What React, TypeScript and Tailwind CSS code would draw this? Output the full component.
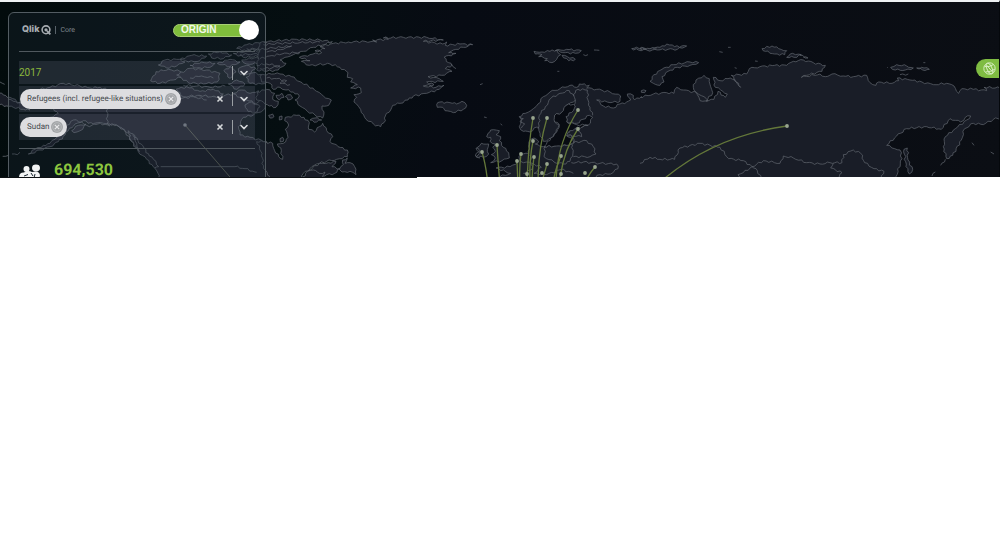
import { useState } from "react";

/* Coast lines are listed tile by tile, three drawing units to the pixel. */
type Shape = { d: string; open?: boolean; land?: boolean };
type Tile = { x: number; shapes: Shape[] };

function roughen(d: string, open?: boolean) {
  const pts = d.trim().split(/\s+/).map((p) => p.split(",").map(Number));
  if (!open) pts.push(pts[0]);
  const out: string[] = [];
  for (let i = 0; i < pts.length - 1; i++) {
    const [x1, y1] = pts[i];
    const [x2, y2] = pts[i + 1];
    const len = Math.hypot(x2 - x1, y2 - y1);
    const steps = len > 150 ? 1 : Math.max(1, Math.round(len / 8));
    for (let s = 0; s < steps; s++) {
      const t = s / steps;
      const n = s === 0 ? 0 : Math.sin((x1 + i * 7 + s * 31) * 12.9) * 3;
      const nx = -(y2 - y1) / (len || 1);
      const ny = (x2 - x1) / (len || 1);
      out.push(`${(x1 + (x2 - x1) * t + nx * n).toFixed(1)},${(y1 + (y2 - y1) * t + ny * n).toFixed(1)}`);
    }
  }
  out.push(pts[pts.length - 1].join(","));
  return "M" + out.join("L") + (open ? "" : "Z");
}

const tiles: Tile[] = [
  {
    x: 0,
    shapes: [
      { d: "-10,275 10,285 30,292 60,308 75,318 90,330 70,328 40,322 20,318 -10,312" },
      { d: "-10,246 0,246 14,253", open: true },
      { d: "8,469 26,466", open: true },
      { d: "36,462 52,464 60,457", open: true },
      { d: "85,462 105,448 130,436 150,430 165,418 178,408 160,402 150,390 158,376 140,368 150,352 175,340 160,326 130,322 138,308 166,304 150,290 108,278 120,268 150,262 190,250 240,258 270,264 300,262 322,270 370,280 420,288 480,270 560,282 640,290 700,282 760,292 800,310 790,330 760,345 730,352 715,380 720,405 750,412 800,425 800,560 480,560 474,520 460,500 440,478 415,455 395,425 385,400 350,375 310,370 280,372 250,362 225,372 205,392 195,405 175,425 150,440 120,450 95,460" },
      { d: "322,270 322,372 350,376 372,390 395,425", open: true },
      { d: "385,392 392,420 408,440 418,455 410,430 400,402" },
      { d: "200,376 220,360 245,366 268,380 292,368 330,378", open: true },
      { d: "215,392 235,376 258,372 248,388 222,398" },
      { d: "60,308 40,304 24,298", open: true },
    ],
  },
  {
    x: 130,
    shapes: [
      { d: "62,243 78,215 115,208 150,214 160,228 130,240 90,250" },
      { d: "85,195 105,180 140,178 165,186 140,198 110,204" },
      { d: "150,178 185,166 230,168 210,182 175,186" },
      { d: "140,225 180,205 230,210 270,220 262,246 220,252 175,248" },
      { d: "180,196 215,186 255,190 240,202 200,204" },
      { d: "235,162 270,155 305,165 280,176 245,174" },
      { d: "262,190 300,178 330,186 300,200" },
      { d: "282,212 300,200 318,216 300,235" },
      { d: "325,206 350,196 378,205 355,222 332,224" },
      { d: "295,252 320,240 345,252 320,268" },
      { d: "320,145 350,134 400,126 440,132 400,142 350,154" },
      { d: "310,160 360,152 420,158 400,168 340,172" },
      { d: "335,180 380,172 420,180 400,190 350,192" },
      { d: "348,232 370,218 400,226 425,240 395,252 360,250" },
      { d: "138,268 170,260 210,274 250,268 280,282 260,292 210,286 160,290" },
      { d: "310,280 335,270 360,280 385,272 400,296 380,310 350,300 330,292" },
      { d: "345,315 365,306 390,320 375,338 355,335" },
      { d: "160,256 200,258 240,262 286,258", open: true },
      { d: "180,234 215,228 250,234", open: true },
      { d: "110,288 150,296 190,290 230,300", open: true },
      { d: "350,146 400,148 430,144", open: true },
      { d: "330,164 370,162 410,164", open: true },
      { d: "8,404 24,422 42,444 58,468 78,484 86,500 74,504", open: true },
      { d: "92,500 315,500 345,506 375,516 400,530", open: true },
    ],
  },
  {
    x: 260,
    shapes: [
      { d: "0,128 50,122 110,118 180,120 217,125 190,134 160,142 130,154 100,164 75,172 60,180 78,190 55,210 20,214 -10,210" },
      { d: "-10,150 40,144 95,138 70,148 20,156", open: true },
      { d: "10,134 60,130 120,128 180,126", open: true },
      { d: "0,176 28,168 66,162 120,156", open: true },
      { d: "-10,196 20,192 60,198 36,204 0,206", open: true },
      { d: "0,228 26,220 60,222 95,230 120,245 145,258 170,274 190,288 214,300 206,316 186,318 192,336 188,354 165,345 142,334 120,318 105,300 118,288 100,276 78,270 60,262 40,268 30,250 5,246" },
      { d: "20,234 50,236 80,242 60,250 90,254", open: true },
      { d: "20,268 44,280 38,298 55,304 48,322 28,318 10,306 -10,300 -8,276" },
      { d: "48,286 66,280 72,292 58,300" },
      { d: "76,290 92,284 98,294 84,300" },
      { d: "26,346 38,342 42,350 30,354" },
      { d: "58,350 66,348 66,358 58,360" },
      {
        d: "-10,425 10,425 38,430 44,452 56,470 68,478 64,452 52,432 70,430 84,412 76,388 86,375 74,362 76,352 110,346 132,352 148,368 146,388 164,396 178,380 188,370 200,392 218,410 210,424 234,440 262,450 262,470 230,478 200,484 170,492 150,506 130,520 118,545 -10,545",
        open: true,
        land: true,
      },
      { d: "60,416 68,412 70,424 61,426" },
      { d: "150,360 165,354 185,360 170,366" },
      { d: "145,512 178,490 205,488 228,484 216,500 240,506 224,520 200,524 180,530" },
      { d: "262,474 255,490 270,488 284,500 288,524 270,514 246,516 238,508 250,494 248,480" },
      { d: "120,545 142,514 160,510 178,520 195,516 188,535" },
      { d: "-10,425 6,460 10,505 30,530", open: true },
      { d: "118,172 150,164 185,158 165,152 195,146 180,140 220,130 265,126 315,124 350,126 338,120 385,118 370,114 430,112 500,112 550,120 490,124 548,132 560,126 556,136 600,132 638,134 610,142 580,150 566,158 588,160 552,172 566,188 576,196 556,206 576,214 545,226 504,230 538,236 550,244 500,246 522,254 490,258 528,262 552,256 538,268 500,280 460,288 444,300 420,310 398,316 392,330 376,348 372,368 362,380 340,372 318,358 304,338 296,320 282,306 290,292 282,284 304,278 302,264 272,264 292,254 272,246 278,236 262,232 264,218 240,202 210,192 174,194 148,196 124,184 150,182" },
      { d: "530,314 540,306 552,310 570,308 590,312 606,304 620,316 610,328 580,338 555,332 548,322 532,322" },
      { d: "574,192 588,206", open: true },
      { d: "660,440 648,444 656,456 646,468 660,474", open: true },
    ],
  },
  {
    x: 460,
    shapes: [
      { d: "222,154 246,156 270,154 290,150 302,164 290,178 276,188 254,182 262,176 236,170 246,164 226,162" },
      { d: "286,152 320,148 364,152 346,160 316,158" },
      { d: "306,166 322,170 346,178 326,182" },
      { d: "370,164 384,164", open: true },
      { d: "402,150 418,151", open: true },
      { d: "515,146 545,142 560,148 535,150" },
      { d: "570,148 590,142 600,148", open: true },
      { d: "292,214 298,214", open: true },
      { d: "60,254 68,251", open: true },
      { d: "72,351 80,353", open: true },
      { d: "122,371 126,376", open: true },
      { d: "178,350 196,340 220,326 234,312 250,290 270,276 300,266 330,256 350,262 358,252 388,256 380,264 410,268 450,276 482,288 480,304 450,308 410,300 430,318 460,324 480,312 500,306 512,300 502,282 520,286 524,300 545,290 548,560 100,560 120,530 152,520 108,504 150,500 174,486 182,464 206,460 206,440 210,420 222,414 236,424 226,432 250,440 290,436 320,436 342,428 338,412 318,406 330,390 345,384 384,376 398,352 388,346 350,370 320,366 316,350 340,318 346,300 326,312 312,326 304,338 284,346 284,366 298,374 288,398 276,414 250,424 240,400 236,382 222,384 210,396 190,394 178,380 184,366" },
      { d: "284,346 304,338 312,322 326,312 346,318 340,332 318,350 320,366 350,374 384,376 345,386 330,392 320,408 338,414 342,428 320,436 290,438 252,440 262,424 280,410 290,396 298,374 284,366" },
      { d: "84,400 92,390 118,392 108,404 122,410 118,422 130,442 146,458 148,474 126,482 92,488 106,474 94,464 106,454 98,442 106,432 90,424 92,412 80,410" },
      { d: "52,442 64,430 86,432 82,448 86,462 70,472 48,470 58,460" },
      { d: "234,386 240,362 238,346 256,320 274,294 300,280 328,272 342,288", open: true },
      { d: "346,300 340,284 354,268 382,270 384,300 390,322 398,346", open: true },
      { d: "256,438 252,470 282,486 310,492 330,484 338,468 338,434", open: true },
      { d: "322,406 365,410 360,396 345,386", open: true },
      { d: "340,428 380,422 400,440 408,462 390,470 340,470", open: true },
      { d: "334,488 370,486 420,490 470,492 474,506 452,522 420,524 390,540", open: true },
      { d: "182,484 216,490 244,502 222,520 260,524 304,508 340,520", open: true },
      { d: "210,466 216,508 190,520", open: true },
      { d: "178,350 190,356 180,366 194,372 184,384", open: true },
    ],
  },
  {
    x: 640,
    shapes: [
      { d: "0,146 30,146 60,142 80,132 104,140 140,138 112,148 84,148 52,150 22,151" },
      { d: "238,155 248,157", open: true },
      { d: "264,142 272,142", open: true },
      { d: "345,183 353,184", open: true },
      { d: "284,203 290,205", open: true },
      { d: "366,146 396,138 416,146 440,152 434,164 404,162 376,154" },
      { d: "440,172 458,160 484,164 462,172" },
      { d: "490,172 504,174", open: true },
      { d: "30,244 42,224 66,208 100,194 150,186 176,188 150,196 112,202 84,214 66,230 72,246 60,256 40,250" },
      { d: "4,272 18,272 14,278 4,277" },
    ],
  },
  {
    x: 800,
    shapes: [
      {
        d: "-480,292 -440,282 -400,278 -378,280 -370,262 -350,270 -310,278 -288,290 -276,302 -300,302 -308,284 -320,262 -312,240 -288,226 -272,236 -268,260 -262,278 -282,304 -258,298 -246,274 -224,292 -218,282 -238,270 -254,262 -260,232 -240,242 -216,236 -196,238 -184,250 -178,262 -190,246 -206,226 -160,222 -152,206 -120,200 -76,196 -40,196 -20,184 10,180 40,188 76,196 66,214 20,226 4,232 60,222 76,230 96,222 130,228 160,230 200,226 210,248 228,256 236,246 276,250 296,242 292,234 330,240 366,246 400,254 440,250 462,258 476,280 486,266 520,268 560,272 552,262 610,264 610,352 580,358 550,374 520,370 494,386 484,420 458,466 440,476 430,440 436,410 466,386 500,360 512,348 496,352 482,366 450,356 424,388 380,380 320,386 290,408 260,436 284,446 300,450 306,476 288,530 270,560 -480,560",
        open: true,
        land: true,
      },
      { d: "312,448 322,444 324,480 338,508 328,522 318,500" },
      { d: "272,202 290,194 320,198 340,204 316,210 286,210" },
      { d: "350,204 372,204 388,208 368,210" },
      { d: "300,224 325,222", open: true },
      { d: "262,202 264,204", open: true },
      { d: "370,188 376,188", open: true },
      { d: "516,428 522,436", open: true },
      { d: "572,456 582,462", open: true },
      { d: "436,478 422,496", open: true },
      { d: "406,516 396,528", open: true },
      { d: "0,166 24,174", open: true },
      { d: "-480,490 -450,472 -420,478 -376,478 -360,444 -300,430 -240,442 -214,476 -170,482 -144,500 -110,482 -60,490 -50,468 -20,474 20,488 60,492 90,488 126,488 130,464 160,450 182,460 194,488 222,506 252,514 244,535", open: true },
      { d: "-144,500 -170,518 -186,524 -176,540", open: true },
      { d: "-144,500 -128,512 -116,535", open: true },
      { d: "100,490 92,504 126,518 110,535", open: true },
    ],
  },
];

/* The Baltic is drawn over the land around it. */
const seas = new Set([tiles[3].shapes[12].d]);

const routes = [
  "M533 118Q528 146 527 185",
  "M547 118Q538 148 538 185",
  "M578 110Q556 145 556 185",
  "M578 129Q563 150 559 185",
  "M533 141Q529 160 530 185",
  "M482 152Q486 165 488 185",
  "M497 145Q498 162 500 185",
  "M521 154Q519 168 520 185",
  "M517 161L518 185",
  "M534 157Q532 170 532 185",
  "M547 164L541 185",
  "M561 156Q554 172 553 185",
  "M595 167Q588 175 584 185",
  "M787 126Q712 136 658 184",
];

const stops = [
  [533, 118], [547, 118], [578, 110], [578, 129], [533, 141], [482, 152], [497, 145], [521, 154],
  [517, 161], [534, 157], [547, 164], [561, 156], [595, 167], [585, 173], [561, 174], [542, 173],
  [527, 174], [787, 126],
];

function shapeFill(s: Shape) {
  if (seas.has(s.d)) return "#080b12";
  return s.open && !s.land ? "none" : "#191d27";
}

function WorldMap() {
  return (
    <svg
      className="absolute inset-0 h-full w-full"
      viewBox="0 2 1000 175"
      preserveAspectRatio="xMinYMin slice"
      aria-hidden="true"
    >
      {tiles.map((tile) => (
        <g key={tile.x} transform={`translate(${tile.x} 0) scale(0.33333)`}>
          {tile.shapes.map((s) => (
            <path
              key={s.d}
              d={roughen(s.d, s.open)}
              fill={shapeFill(s)}
              stroke={tile.x < 200 ? "#6b7078" : "#5f646c"}
              strokeWidth="2.2"
              strokeLinejoin="round"
            />
          ))}
        </g>
      ))}
      <path d="M185 125L236 184" stroke="#62665a" fill="none" />
      <circle cx="185" cy="125" r="1.8" fill="#8b9096" />
      {routes.map((d) => (
        <path key={d} d={d} fill="none" stroke="#64783a" strokeWidth="1.3" />
      ))}
      {stops.map(([x, y]) => (
        <circle key={`${x}-${y}`} cx={x} cy={y} r="1.9" fill="#98a58e" />
      ))}
    </svg>
  );
}

function Chevron() {
  return (
    <svg className="h-2 w-2" viewBox="0 0 8 8" aria-hidden="true">
      <path d="M1 2.5L4 5.5L7 2.5" fill="none" stroke="#d6d9db" strokeWidth="1.6" strokeLinecap="round" />
    </svg>
  );
}

function TagField({ label, value }: { label: string; value: string }) {
  const [selected, setSelected] = useState(true);
  const clear = () => setSelected(false);
  return (
    <div role="group" aria-label={label} className="flex h-[26px] items-center bg-[#e0e2ff]/10">
      {selected && (
        <span className="ml-px flex h-5 items-center gap-0.5 rounded-full bg-[#dddde0] pr-1 pl-[7px] text-[#45494d]">
          <span className="text-[8px] whitespace-nowrap">{value}</span>
          <button type="button" aria-label={`Remove ${value}`} onClick={clear}>
            <svg className="h-3 w-3" viewBox="0 0 12 12">
              <circle cx="6" cy="6" r="6" fill="#a2a4a7" />
              <circle cx="6" cy="6" r="4.3" fill="none" stroke="#c6c7c9" strokeWidth=".6" />
              <path d="M3.8 3.8L8.2 8.2M8.2 3.8L3.8 8.2" stroke="#e8e8ea" strokeWidth="1.2" />
            </svg>
          </button>
        </span>
      )}
      <button type="button" aria-label={`Clear ${label}`} onClick={clear} className="mr-2 ml-auto">
        <svg className="h-2 w-2" viewBox="0 0 8 8">
          <path d="M1.5 1.5L6.5 6.5M6.5 1.5L1.5 6.5" stroke="#d6d9db" strokeWidth="1.6" />
        </svg>
      </button>
      <span className="h-3.5 w-px bg-[#9a9fa3]" />
      <button type="button" aria-label={`Open ${label}`} className="mx-[7px]">
        <Chevron />
      </button>
    </div>
  );
}

function OriginSwitch() {
  const [on, setOn] = useState(true);
  return (
    <button
      type="button"
      role="switch"
      aria-checked={on}
      onClick={() => setOn(!on)}
      className="flex h-5 w-[86px] items-center"
    >
      <span className="flex h-[13px] flex-1 items-center rounded-l-full border border-[#a8cf74] bg-[#80bd3c] pl-[7px] font-['Liberation_Sans',Arial,sans-serif] text-[10px] leading-none font-bold text-[#f3f8ea]">
        ORIGIN
      </span>
      <span className="-ml-2 h-5 w-5 rounded-full bg-white" />
    </button>
  );
}

export default function App() {
  return (
    <main className="min-h-screen bg-white font-[Roboto,'Liberation_Sans',sans-serif] [text-rendering:geometricPrecision]">
      <section className="relative h-[177px] overflow-hidden border-t-2 border-r border-t-[#eef1f3] border-r-[#05080c] bg-[linear-gradient(100deg,#020b0c_0%,#050e11_30%,#070b13_45%,#0b0e14_100%)]">
        <WorldMap />
        <div className="relative flex items-start justify-between pt-2.5 pl-2">
          <aside className="h-[190px] w-[258px] rounded-md border border-[#535c62] bg-[#1c2733]/35 px-2.5">
            <header className="flex h-[38px] items-center justify-between pb-1 pl-[3px]">
              <div className="flex items-center text-[#a6abb0]">
                <span className="font-[Inter,sans-serif] text-[9px] font-extrabold">Qlik</span>
                <svg className="ml-0.5 h-2.5 w-2.5" viewBox="0 0 10 10" aria-hidden="true">
                  <circle cx="5" cy="4.8" r="3.9" fill="none" stroke="currentColor" strokeWidth="1.6" />
                  <circle cx="5" cy="4.8" r="1.6" fill="currentColor" />
                  <path d="M6 6L9.4 9.4" stroke="currentColor" strokeWidth="1.8" />
                </svg>
                <span className="mx-1 h-2 w-px bg-[#59636a]" />
                <span className="text-[7px] text-[#80878d]">Core</span>
              </div>
              <div className="-mr-1">
                <OriginSwitch />
              </div>
            </header>
            <div className="flex flex-col gap-0.5 border-y border-[#50585e] pt-[9px] pb-2">
              <div className="relative flex h-[23px] items-center bg-[#e0e2ff]/10">
                <select
                  aria-label="Year"
                  className="h-full w-full appearance-none bg-transparent p-0 text-[10px] text-[#8cb83c] outline-none"
                  defaultValue="2017"
                >
                  <option>2017</option>
                </select>
                <span className="pointer-events-none absolute right-[7px] flex items-center gap-[7px]">
                  <span className="h-3.5 w-px bg-[#9a9fa3]" />
                  <Chevron />
                </span>
              </div>
              <TagField label="Population type" value="Refugees (incl. refugee-like situations)" />
              <TagField label="Country" value="Sudan" />
            </div>
            <div className="flex items-center gap-[13px] pt-[11px]">
              <svg className="h-5 w-[22px]" viewBox="0 0 22 20" fill="#f2f4f4" aria-hidden="true">
                <circle cx="7.5" cy="9" r="3" />
                <ellipse cx="17" cy="8" rx="4" ry="3.4" />
                <path d="M0 21Q-1 12 5 12.5Q9 10 13 12Q21 10 21 16Q20 20 15 21Z" />
                <path d="M5 16L9 14.5M12 13L14 16M16 14L15 18" stroke="#17242d" fill="none" />
              </svg>
              <strong className="text-[16px] leading-[14px] font-bold text-[#8dc63f]">694,530</strong>
            </div>
          </aside>
          <button
            type="button"
            aria-label="Globe view"
            className="mt-[47px] flex h-[19px] w-[23px] items-center rounded-l-full bg-[#7fbc42] pl-[7px]"
          >
            <svg className="h-[13px] w-[13px]" viewBox="0 0 13 13" fill="none" stroke="#d5ecbd" strokeWidth="1">
              <circle cx="6.5" cy="6.5" r="5.7" />
              <ellipse cx="6.5" cy="6.5" rx="2.5" ry="5.7" transform="rotate(-25 6.5 6.5)" />
              <path d="M1.5 4.5Q6 5.5 10.5 2.5M2.5 10Q8 10 12 7M3 2.5L10 10.5" />
            </svg>
          </button>
        </div>
      </section>
      <div className="h-px w-5/12 bg-[#0c1013]" />
    </main>
  );
}
